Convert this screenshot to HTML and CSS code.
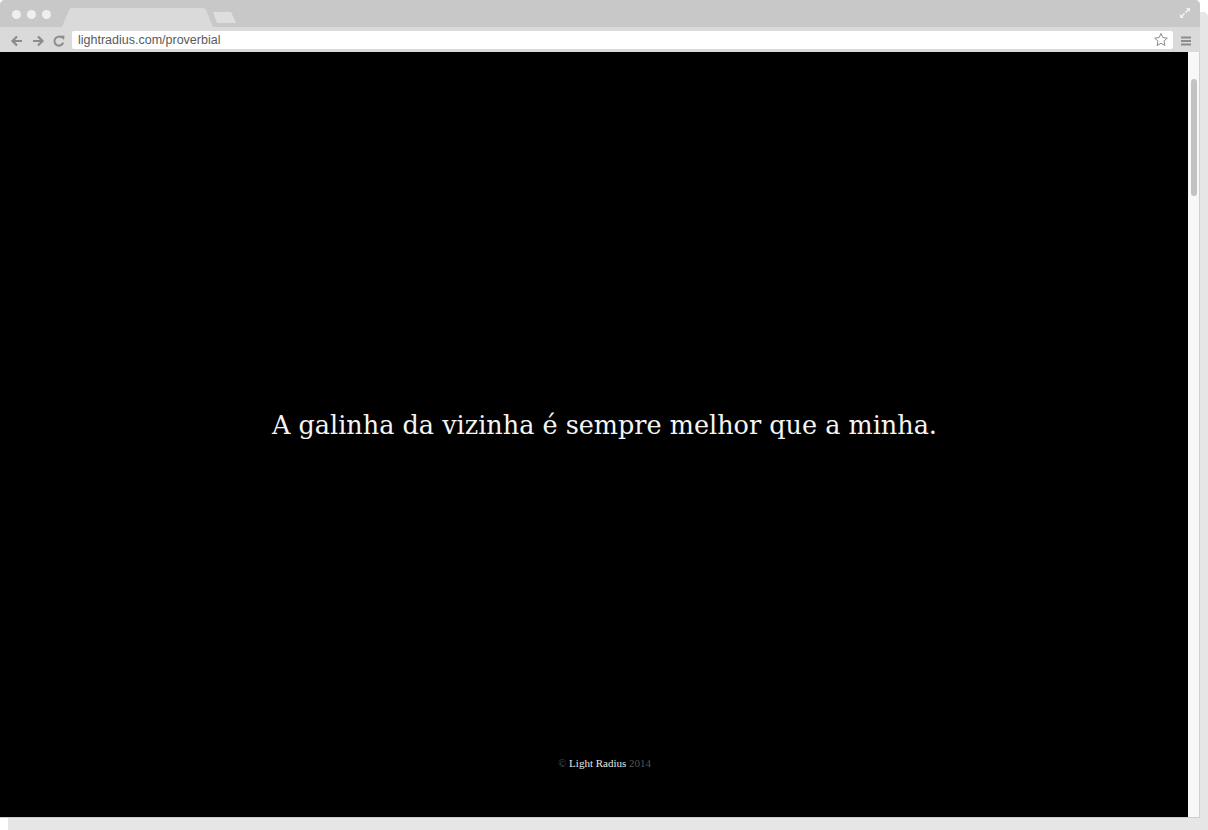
FILE: index.html
```html
<!DOCTYPE html>
<html>
<head>
<meta charset="utf-8">
<title>Proverbial</title>
<link rel="stylesheet" href="styles.css">
</head>
<body>
<div class="window">
  <div class="titlebar">
    <div class="dots"><span class="dot"></span><span class="dot"></span><span class="dot"></span></div>
    <svg class="tabs" width="180" height="19" viewBox="0 0 180 19">
      <path d="M0 19 L7 2 Q8 0 10 0 L141 0 Q143 0 144 2 L151 19 Z" fill="#dadada"/>
      <path d="M151 4 L169 4 L174 15 L155 15 Z" fill="#dedede"/>
    </svg>
    <svg class="expand" width="12" height="12" viewBox="0 0 12 12">
      <path d="M7 1 L11 1 L11 5 Z M1 7 L1 11 L5 11 Z" fill="#f2f2f2"/>
      <path d="M10 2 L6.5 5.5 M2 10 L5.5 6.5" stroke="#f2f2f2" stroke-width="1.6"/>
    </svg>
  </div>
  <div class="toolbar">
    <div class="nav">
      <svg width="14" height="14" viewBox="0 0 14 14"><path d="M12 7 H3 M7 2.5 L2.5 7 L7 11.5" stroke="#8c8c8c" stroke-width="2.2" fill="none"/></svg>
      <svg width="14" height="14" viewBox="0 0 14 14"><path d="M2 7 H11 M7 2.5 L11.5 7 L7 11.5" stroke="#8c8c8c" stroke-width="2.2" fill="none"/></svg>
      <svg width="14" height="14" viewBox="0 0 14 14"><path d="M11.2 8.6 A4.5 4.5 0 1 1 10 3.8" stroke="#8c8c8c" stroke-width="2" fill="none"/><path d="M8 2 L12.5 1.5 L12 6 Z" fill="#8c8c8c"/></svg>
    </div>
    <div class="url">
      <span class="url-text">lightradius.com/proverbial</span>
      <svg class="star" width="16" height="16" viewBox="0 0 16 16"><path d="M8 1.5 L9.9 5.6 L14.3 6.1 L11 9.1 L11.9 13.5 L8 11.3 L4.1 13.5 L5 9.1 L1.7 6.1 L6.1 5.6 Z" fill="none" stroke="#8a8a8a" stroke-width="1"/></svg>
    </div>
    <svg class="menu" width="12" height="12" viewBox="0 0 12 12"><path d="M1 2.5 H11 M1 6 H11 M1 9.5 H11" stroke="#8c8c8c" stroke-width="1.8"/></svg>
  </div>
  <div class="viewport">
    <main class="page">
      <div class="quote-wrap">
        <p class="quote">A galinha da vizinha é sempre melhor que a minha.</p>
      </div>
      <footer class="footer"><span class="dim">©</span> <span class="name">Light Radius</span> <span class="dim">2014</span></footer>
    </main>
    <div class="scrollbar"><div class="thumb"></div></div>
  </div>
</div>
</body>
</html>
```
FILE: styles.css
```css
html, body {
  margin: 0;
  padding: 0;
  background: #ffffff;
}
body {
  width: 1208px;
  height: 830px;
  overflow: hidden;
}
.window {
  width: 1200px;
  height: 818px;
  border-radius: 5px 5px 0 0;
  background: #c8c8c8;
  box-shadow: 8px 12px 0 #e6e6e6;
  display: flex;
  flex-direction: column;
  overflow: hidden;
}
.titlebar {
  height: 27px;
  flex: none;
  display: flex;
  align-items: flex-end;
  background: #c8c8c8;
}
.dots {
  display: flex;
  gap: 6px;
  padding: 0 0 8px 12px;
  align-self: flex-end;
}
.dot {
  width: 9px;
  height: 9px;
  border-radius: 50%;
  background: #efefef;
}
.tabs {
  display: block;
  margin-left: 11px;
}
.expand {
  margin-left: auto;
  margin-right: 9px;
  align-self: flex-start;
  margin-top: 7px;
}
.toolbar {
  height: 25px;
  flex: none;
  background: #dadada;
  display: flex;
  align-items: center;
}
.nav {
  display: flex;
  gap: 7px;
  padding-left: 10px;
  width: 62px;
  margin-top: 2px;
}
.url {
  width: 1101px;
  height: 18px;
  background: #ffffff;
  border-radius: 2px;
  display: flex;
  align-items: center;
  padding: 0 4px 0 6px;
  box-sizing: border-box;
  margin-top: 1px;
}
.url-text {
  font-family: "Liberation Sans", Arial, sans-serif;
  font-size: 12.5px;
  color: #5a5a5a;
  flex: 1;
}
.star {
  display: block;
}
.menu {
  margin-left: 7px;
  margin-top: 2px;
}
.viewport {
  flex: 1;
  display: flex;
  min-height: 0;
  border-bottom: 1px solid #cfcfcf;
}
.page {
  flex: 1;
  background: #000000;
  display: flex;
  flex-direction: column;
  align-items: center;
  padding-left: 21px;
}
.quote-wrap {
  flex: 1;
  display: flex;
  align-items: center;
  padding-top: 40px;
}
.quote {
  margin: 0;
  font-family: "DejaVu Serif", "Liberation Serif", serif;
  font-size: 25.5px;
  color: #f4f4f4;
}
.footer {
  font-family: "Liberation Serif", "Times New Roman", serif;
  font-size: 11px;
  height: 60px;
  color: #e6e6e6;
}
.dim {
  color: #555555;
}
.scrollbar {
  width: 11px;
  background: #f8f8f8;
  border-right: 1px solid #d0d0d0;
  padding-top: 27px;
  display: flex;
  justify-content: center;
}
.thumb {
  width: 6px;
  height: 117px;
  border-radius: 3px;
  background: #c2c2c2;
}
```
